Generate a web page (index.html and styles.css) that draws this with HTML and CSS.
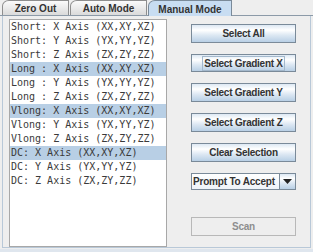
FILE: index.html
```html
<!DOCTYPE html>
<html>
<head>
<meta charset="utf-8">
<link rel="stylesheet" href="styles.css">
</head>
<body>
<div class="window">
  <div class="tabs">
    <div class="tab tab-zero">Zero Out</div>
    <div class="tab tab-auto">Auto Mode</div>
    <div class="tab tab-manual selected">Manual Mode</div>
  </div>
  <div class="panel">
    <div class="list">
      <div class="row">Short: X Axis (XX,XY,XZ)</div>
      <div class="row">Short: Y Axis (YX,YY,YZ)</div>
      <div class="row">Short: Z Axis (ZX,ZY,ZZ)</div>
      <div class="row sel">Long : X Axis (XX,XY,XZ)</div>
      <div class="row">Long : Y Axis (YX,YY,YZ)</div>
      <div class="row">Long : Z Axis (ZX,ZY,ZZ)</div>
      <div class="row sel">Vlong: X Axis (XX,XY,XZ)</div>
      <div class="row">Vlong: Y Axis (YX,YY,YZ)</div>
      <div class="row">Vlong: Z Axis (ZX,ZY,ZZ)</div>
      <div class="row sel">DC: X Axis (XX,XY,XZ)</div>
      <div class="row">DC: Y Axis (YX,YY,YZ)</div>
      <div class="row">DC: Z Axis (ZX,ZY,ZZ)</div>
    </div>
    <div class="controls">
      <button class="btn">Select All</button>
      <button class="btn focused"><span class="focus">Select Gradient X</span></button>
      <button class="btn">Select Gradient Y</button>
      <button class="btn">Select Gradient Z</button>
      <button class="btn">Clear Selection</button>
      <div class="combo">
        <span class="combo-text">Prompt To Accept</span>
        <span class="combo-arrow"><svg width="9" height="5" viewBox="0 0 9 5"><path d="M0 0h9L4.5 5z" fill="#222"/></svg></span>
      </div>
      <button class="btn disabled">Scan</button>
    </div>
  </div>
</div>
</body>
</html>
```
FILE: styles.css
```css
* { box-sizing: border-box; }
html, body { margin: 0; padding: 0; }
body {
  width: 313px;
  height: 252px;
  background: #dfe6ee;
  font-family: "Liberation Sans", Arial, sans-serif;
  overflow: hidden;
}
.window {
  width: 313px;
  height: 249px;
  background: #eeeeee;
}
.tabs {
  display: flex;
  height: 16px;
  padding-left: 2px;
  align-items: flex-end;
  border-bottom: 1px solid #8c9aa8;
}
.tab {
  height: 15px;
  border: 1px solid #8e8e8e;
  border-bottom: none;
  border-top-left-radius: 7px 6px;
  background: linear-gradient(#fbfbfb, #dadada);
  font-weight: bold;
  font-size: 10px;
  color: #333;
  display: flex;
  align-items: center;
  justify-content: center;
  padding-top: 1px;
}
.tab-zero { width: 67px; }
.tab-auto { width: 77px; margin-left: 1px; }
.tab-manual { width: 84px; margin-left: 1px; }
.tab.selected {
  background: #c8ddf2;
  border-color: #7a8a99;
  height: 16px;
  margin-bottom: -1px;
}
.panel {
  display: flex;
  height: 232px;
  margin: 0 2px;
  border-left: 1px solid #b8c8d8;
  border-right: 1px solid #b8c8d8;
  border-bottom: 1px solid #b8c8d8;
  padding: 3px 0 0 6px;
}
.list {
  width: 158px;
  height: 228px;
  background: #fff;
  border: 1px solid #a8a8a8;
  font-family: "DejaVu Sans Mono", monospace;
  font-size: 10px;
  color: #3a3a3a;
}
.row {
  height: 14px;
  line-height: 14px;
  padding-left: 1px;
  white-space: nowrap;
}
.row.sel { background: #b8cfe5; }
.controls {
  display: flex;
  flex-direction: column;
  margin-left: 24px;
  padding-top: 5px;
  width: 105px;
}
.btn {
  width: 105px;
  height: 19px;
  margin: 0 0 11px 0;
  padding: 0;
  border: 1px solid #7a8a99;
  background: linear-gradient(#dde8f3 0%, #ffffff 30%, #dde8f3 60%, #b8cfe5 100%);
  font-family: "Liberation Sans", Arial, sans-serif;
  font-weight: bold;
  font-size: 10px;
  letter-spacing: -0.25px;
  color: #333;
  display: flex;
  align-items: center;
  justify-content: center;
}
.focus {
  border: 1px solid #a3b8cc;
  padding: 1px 1px;
  line-height: 11px;
}
.combo {
  height: 18px;
  width: 105px;
  border: 1px solid #7a8a99;
  display: flex;
  background: linear-gradient(#ffffff, #eef3f8);
}
.combo-text {
  flex: 1;
  font-weight: bold;
  font-size: 10px;
  letter-spacing: -0.2px;
  color: #333;
  display: flex;
  align-items: center;
  padding-left: 1px;
}
.combo-arrow {
  width: 16px;
  border-left: 1px solid #7a8a99;
  background: linear-gradient(#dde8f3 0%, #ffffff 30%, #dde8f3 60%, #b8cfe5 100%);
  display: flex;
  align-items: center;
  justify-content: center;
}
.btn.disabled {
  margin-top: 27px;
  border-color: #b8b8b8;
  background: #eeeeee;
  color: #8e8e8e;
}
```
